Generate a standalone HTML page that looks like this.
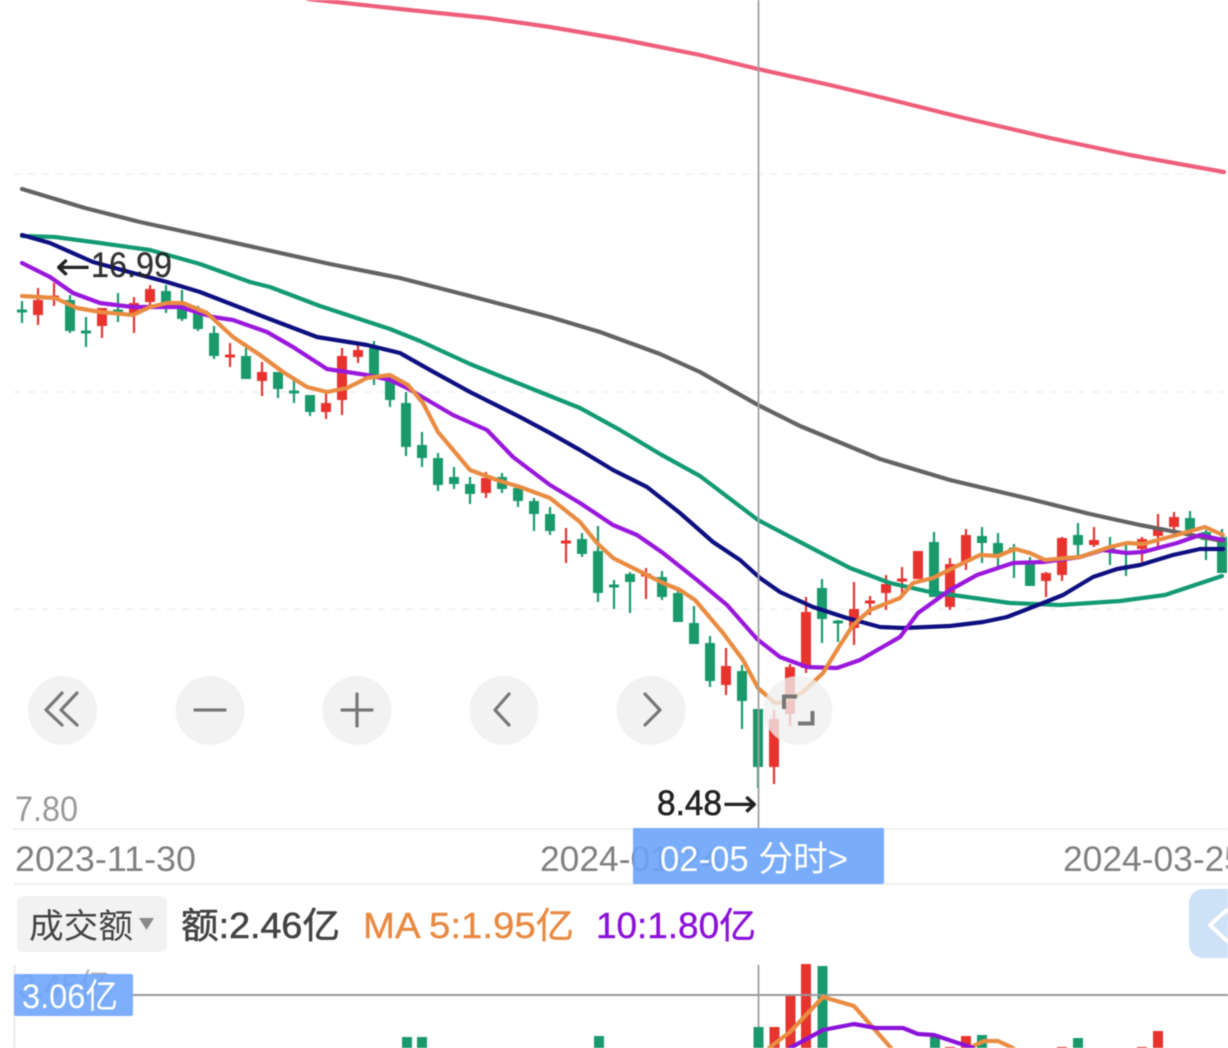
<!DOCTYPE html>
<html lang="zh">
<head>
<meta charset="utf-8">
<title>K线图</title>
<style>
html,body{margin:0;padding:0;background:#fff;width:1228px;height:1048px;overflow:hidden}
svg{display:block;filter:blur(.45px)}
text{font-family:"Liberation Sans","Noto Sans CJK SC",sans-serif}
.l{fill:none;stroke-width:4.2;stroke-linejoin:round;stroke-linecap:round}
.ic{fill:none;stroke:#777;stroke-width:3.2;stroke-linecap:round;stroke-linejoin:round}
</style>
</head>
<body>
<svg width="1228" height="1048" viewBox="0 0 1228 1048" xmlns="http://www.w3.org/2000/svg">
<!-- grid -->
<g stroke="#efefef" stroke-width="1.5" stroke-dasharray="7 7" fill="none">
<path d="M14 174H1228"/><path d="M14 392H1228"/><path d="M14 609H1228"/>
</g>
<path d="M14 829H1228M14 884H1228" stroke="#eeeeee" stroke-width="2" fill="none"/>
<path d="M14.5 965V1048" stroke="#e4e4e4" stroke-width="1.5" fill="none"/>

<!-- date labels -->
<text x="15" y="871" font-size="35" fill="#808080" textLength="181" lengthAdjust="spacingAndGlyphs">2023-11-30</text>
<text x="540" y="871" font-size="35" fill="#808080" textLength="181" lengthAdjust="spacingAndGlyphs">2024-01-24</text>
<text x="1063" y="871" font-size="35" fill="#808080" textLength="181" lengthAdjust="spacingAndGlyphs">2024-03-25</text>
<text x="15" y="821" font-size="35" fill="#999999" textLength="63" lengthAdjust="spacingAndGlyphs">7.80</text>

<!-- candle wicks -->
<path fill="none" stroke="#1a9a6c" stroke-width="2.2" d="M22 301V323M70 295V333M86 317V347M118 293V322M166 285V313M182 290V321M198 306V331M214 326V359M246 348V379M278 372V398M294 378V403M310 395V416M374 341V385M390 375V407M406 392V456M422 432V467M438 453V491M454 467V489M470 477V504M502 473V493M518 485V507M534 498V531M550 507V535M582 533V557M598 526V602M614 580V609M630 572V613M662 571V600M678 587V622M694 606V644M710 636V687M742 665V729M758 709V788M822 579V643M838 620V642M934 532V597M982 527V563M998 533V567M1014 544V578M1030 557V586M1078 523V555M1110 537V565M1126 545V576M1190 511V533M1206 530V560M1222 529V573"/>
<path fill="none" stroke="#e7342f" stroke-width="2.2" d="M38 288V325M54 283V306M102 308V338M134 297V333M150 285V305M230 343V367M262 362V396M326 393V419M342 348V415M358 342V363M486 472V498M566 528V563M646 568V599M726 648V695M774 710V784M790 664V726M806 597V673M854 582V645M870 596V615M886 575V610M902 567V593M950 558V610M966 529V570M1046 572V597M1062 537V581M1094 527V547M1142 537V562M1158 514V547M1174 512V535"/>
<!-- candle bodies -->
<path fill="none" stroke="#1a9a6c" stroke-width="10" d="M70 300V331M166 291V303M182 305V319M198 313V329M214 333V356M246 356V379M278 372V389M310 395V412M374 348V376M390 380V400M406 403V447M422 445V458M438 458V485M454 477V484M470 484V494M502 477V489M518 488V501M534 501V514M550 514V531M582 539V554M598 551V593M630 574V582M662 577V597M678 593V622M694 623V644M710 643V681M742 671V701M758 709V767M822 588V619M934 542V597M982 536V543M998 543V554M1030 563V586M1078 535V545M1190 518V530M1206 532V540M1222 537V573"/>
<path fill="none" stroke="#e7342f" stroke-width="10" d="M38 300V315M102 308V326M134 303V314M150 289V302M262 372V381M326 403V412M342 356V400M358 350V357M486 478V493M726 666V685M774 719V767M790 667V714M806 612V668M854 609V628M886 584V593M918 551V579M950 564V607M966 535V562M1046 573V581M1062 538V575M1094 540V545M1142 539V549M1158 527V536M1174 517V527"/>
<!-- doji -->
<path fill="none" stroke="#1a9a6c" stroke-width="3" d="M17 311H27M81 332H91M113 311H123M289 392H299M609 586H619M833 622H843M1009 549H1019M1105 548H1115M1121 553H1131"/>
<path fill="none" stroke="#e7342f" stroke-width="3" d="M49 297H59M225 356H235M561 542H571M641 575H651M865 602H875M897 580H907"/>

<!-- moving averages -->
<polyline class="l" stroke="#ee5f7b" points="308,-1 345,3 400,9 487,18 550,27 620,39 700,55 758,69 830,85 880,97 960,117 1050,138 1130,155 1224,172"/>
<polyline class="l" stroke="#636363" points="22,189 85,208 140,222 200,235 258,248 330,264 400,278 470,296 550,317 600,332 660,354 700,372 758,405 800,426 880,459 950,480 1030,499 1090,514 1140,525 1222,541"/>
<polyline class="l" stroke="#129a72" points="22,236 55,237 100,243 150,250 200,264 250,282 270,287 320,306 390,329 420,341 470,364 510,380 580,408 620,430 660,454 700,476 758,520 800,542 850,568 890,583 930,592 960,596 1010,603 1060,605 1120,601 1165,595 1222,576"/>
<polyline class="l" stroke="#0e0f80" points="22,235 50,243 93,262 133,273 167,282 200,292 267,318 317,337 367,345 400,353 430,370 470,392 520,417 550,433 580,450 613,470 647,487 680,513 713,542 740,560 760,578 780,592 813,607 847,618 880,627 903,628 950,626 983,622 1007,617 1043,603 1063,595 1093,577 1117,569 1140,565 1173,555 1200,549 1223,549"/>
<polyline class="l" stroke="#9a18dc" points="22,263 50,277 73,293 100,303 133,307 180,307 213,317 233,320 267,332 293,347 327,369 367,375 390,380 407,388 453,415 487,430 513,457 550,485 580,503 613,525 637,535 663,553 697,580 727,605 757,639 780,657 807,667 837,668 860,660 900,637 918,613 950,590 977,575 1013,563 1043,562 1080,557 1103,550 1127,553 1143,552 1177,543 1200,535 1223,540"/>
<polyline class="l" stroke="#e98c42" points="22,296 55,298 77,308 100,312 133,315 150,307 167,303 183,303 207,313 233,337 260,355 283,372 307,387 327,392 347,388 367,378 390,375 408,385 423,403 438,432 470,470 497,480 520,487 550,498 580,522 597,543 613,558 643,573 663,583 680,590 695,600 723,633 743,660 758,688 775,703 783,702 803,692 823,673 837,650 853,625 870,610 900,598 913,583 933,578 963,563 980,555 998,556 1015,549 1030,553 1045,560 1067,558 1080,557 1110,547 1127,543 1143,544 1173,536 1205,527 1223,535"/>

<!-- crosshair -->
<path d="M758.5 0V828M758.5 965V1048" stroke="#a0a0a0" stroke-width="1.8" fill="none"/>

<!-- price extremes -->
<text x="55" y="280" font-size="40" fill="#222222" style="font-family:'DejaVu Sans',sans-serif" textLength="36" lengthAdjust="spacingAndGlyphs">←</text>
<text x="91" y="277" font-size="35" fill="#222222" fill-opacity=".92" stroke="#222222" stroke-width=".3" textLength="81" lengthAdjust="spacingAndGlyphs">16.99</text>
<text x="657" y="815" font-size="35" fill="#222222" stroke="#222222" stroke-width=".6" textLength="65" lengthAdjust="spacingAndGlyphs">8.48</text>
<text x="722" y="817" font-size="40" fill="#222222" style="font-family:'DejaVu Sans',sans-serif" textLength="36" lengthAdjust="spacingAndGlyphs">→</text>

<!-- round buttons -->
<g fill="#f2f2f2">
<circle cx="62.5" cy="710.5" r="34.5"/><circle cx="210" cy="710.5" r="34.5"/><circle cx="357" cy="710.5" r="34.5"/><circle cx="504" cy="710.5" r="34.5"/><circle cx="651" cy="710.5" r="34.5"/>
</g>
<circle cx="798" cy="710.5" r="34.5" fill="#f0f0f0" fill-opacity=".78"/>
<path class="ic" d="M62 693L46 710L62 725M77 693L61 710L77 725"/>
<path class="ic" d="M195 710H225"/>
<path class="ic" d="M342 710H372M357 694V726"/>
<path class="ic" d="M509 694L495 710L509 725"/>
<path class="ic" d="M645 694L660 710L645 725"/>
<path d="M784 709V696.5H797M798 723.5H812.5V711" fill="none" stroke="#777" stroke-width="4"/>

<!-- selected date tag -->
<rect x="633" y="828" width="251" height="56" rx="2" fill="#6aa3fb" fill-opacity=".9"/>
<text x="660" y="871" font-size="35" fill="#ffffff" textLength="188" lengthAdjust="spacingAndGlyphs">02-05 分时&gt;</text>

<!-- indicator row -->
<rect x="17" y="896" width="150" height="56" rx="6" fill="#f2f2f2"/>
<text x="29" y="938" font-size="34" fill="#444444" textLength="104" lengthAdjust="spacingAndGlyphs">成交额</text>
<path d="M139 918H154L146.500 930Z" fill="#8a8a8a"/>
<text x="181" y="938" font-size="36" fill="#444444" stroke="#444444" stroke-width=".6" textLength="159" lengthAdjust="spacingAndGlyphs">额:2.46亿</text>
<text x="363" y="938" font-size="36" fill="#e98a42" stroke="#e98a42" stroke-width=".4" textLength="211" lengthAdjust="spacingAndGlyphs">MA 5:1.95亿</text>
<text x="596" y="938" font-size="36" fill="#8b12d9" stroke="#8b12d9" stroke-width=".4" textLength="160" lengthAdjust="spacingAndGlyphs">10:1.80亿</text>
<path d="M1228 889H1203A14 14 0 0 0 1189 903V944A14 14 0 0 0 1203 958H1228Z" fill="#cde2f6"/>
<path d="M1228 909L1210 925L1228 942" fill="none" stroke="#ffffff" stroke-width="4" stroke-linejoin="round"/>

<!-- volume bars -->
<path fill="none" stroke="#1a9a6c" stroke-width="10" d="M407 1037V1048M422 1037V1048M599 1036V1048M758.500 1027V1048M822.500 966V1048M935 1035V1048M982 1035V1048M1078 1038V1048"/>
<path fill="none" stroke="#e7342f" stroke-width="10" d="M774.500 1027V1048M790.500 994V1048M806 964V1048M950 1047V1048M966 1036V1048M1062 1047V1048M1142 1047V1048M1158 1031V1048"/>
<!-- volume reference line -->
<path d="M133 995H1228" stroke="#999999" stroke-width="2" fill="none"/>
<!-- volume MA -->
<polyline class="l" stroke="#e98c42" points="769,1048 790,1032 823,997 854,1006 891,1048"/>
<polyline class="l" stroke="#e98c42" points="969,1048 984,1041 998,1041 1013,1048"/>
<polyline class="l" stroke="#8b12d9" points="790,1048 823,1030 854,1024 876,1028 903,1028 918,1034 934,1035 973,1048"/>

<!-- value tag -->
<text x="18" y="998" font-size="34" fill="#999999" fill-opacity=".7" textLength="92" lengthAdjust="spacingAndGlyphs">3.45亿</text>
<rect x="14" y="974" width="119" height="42" rx="2" fill="#6aa3fb" fill-opacity=".88"/>
<text x="22" y="1008" font-size="34" fill="#ffffff" textLength="96" lengthAdjust="spacingAndGlyphs">3.06亿</text>
</svg>
</body>
</html>
